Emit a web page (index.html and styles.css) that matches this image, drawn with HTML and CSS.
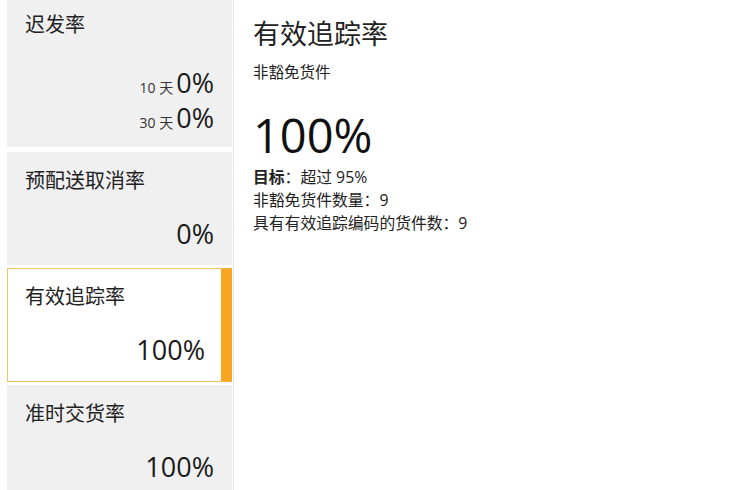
FILE: index.html
```html
<!DOCTYPE html>
<html lang="zh-CN">
<head>
<meta charset="utf-8">
<title>有效追踪率</title>
<link rel="stylesheet" href="styles.css">
</head>
<body>
<div class="page">
  <aside class="sidebar">
    <div class="card card-first">
      <div class="card-title">迟发率</div>
      <div class="card-rows">
        <div class="card-value"><span class="period">10 天</span>0%</div>
        <div class="card-value"><span class="period">30 天</span>0%</div>
      </div>
    </div>
    <div class="card">
      <div class="card-title">预配送取消率</div>
      <div class="card-value card-single">0%</div>
    </div>
    <div class="card card-active">
      <div class="card-title">有效追踪率</div>
      <div class="card-value card-single">100%</div>
    </div>
    <div class="card">
      <div class="card-title">准时交货率</div>
      <div class="card-value card-single">100%</div>
    </div>
  </aside>
  <main class="detail">
    <h1 class="detail-title">有效追踪率</h1>
    <div class="detail-sub">非豁免货件</div>
    <div class="detail-big">100%</div>
    <div class="detail-line"><b>目标</b>：超过 95%</div>
    <div class="detail-line">非豁免货件数量：9</div>
    <div class="detail-line">具有有效追踪编码的货件数：9</div>
  </main>
</div>
</body>
</html>
```

FILE: styles.css
```css
html, body {
  margin: 0;
  padding: 0;
  background: #ffffff;
  height: 100%;
  overflow: hidden;
}

body {
  font-family: "Open Sans", "Noto Sans CJK SC", sans-serif;
  color: #1f1f1f;
}

.page {
  display: flex;
  height: 100%;
}

.sidebar {
  width: 225px;
  margin-left: 7px;
  border-right: 1px solid #e2e2e2;
  padding-right: 1px;
  display: flex;
  flex-direction: column;
  margin-top: -4px;
  flex-shrink: 0;
}

.card {
  background: #f0f0f1;
  padding: 16px 18px 14px 18px;
  margin-bottom: 3px;
}

.card-first {
  margin-bottom: 5px;
  padding-bottom: 12px;
}

.card-title {
  font-size: 20px;
  line-height: 26px;
  color: #222;
}

.card-rows {
  margin-top: 27px;
}

.card-value {
  text-align: right;
  font-size: 27px;
  line-height: 35px;
  color: #1a1a1a;
}

.card-single {
  margin-top: 22px;
}

.period {
  font-size: 14px;
  line-height: 14px;
  margin-right: 3px;
  color: #333;
}

.card-active {
  background: #ffffff;
  border: 1px solid #ecc55e;
  border-right: 11px solid #f7a623;
  padding: 15px 16px 14px 17px;
}

.detail {
  padding: 17px 0 0 19px;
}

.detail-title {
  margin: 0;
  font-weight: normal;
  font-size: 27px;
  line-height: 34px;
  color: #222;
}

.detail-sub {
  margin-top: 10px;
  font-size: 15.5px;
  line-height: 22px;
  color: #222;
}

.detail-big {
  margin-top: 23px;
  font-size: 47px;
  line-height: 58px;
  color: #111;
}

.detail-line {
  font-size: 15.8px;
  line-height: 23px;
  color: #222;
}

.detail-big + .detail-line {
  margin-top: 2px;
}

.detail-line b {
  font-weight: bold;
}
```
